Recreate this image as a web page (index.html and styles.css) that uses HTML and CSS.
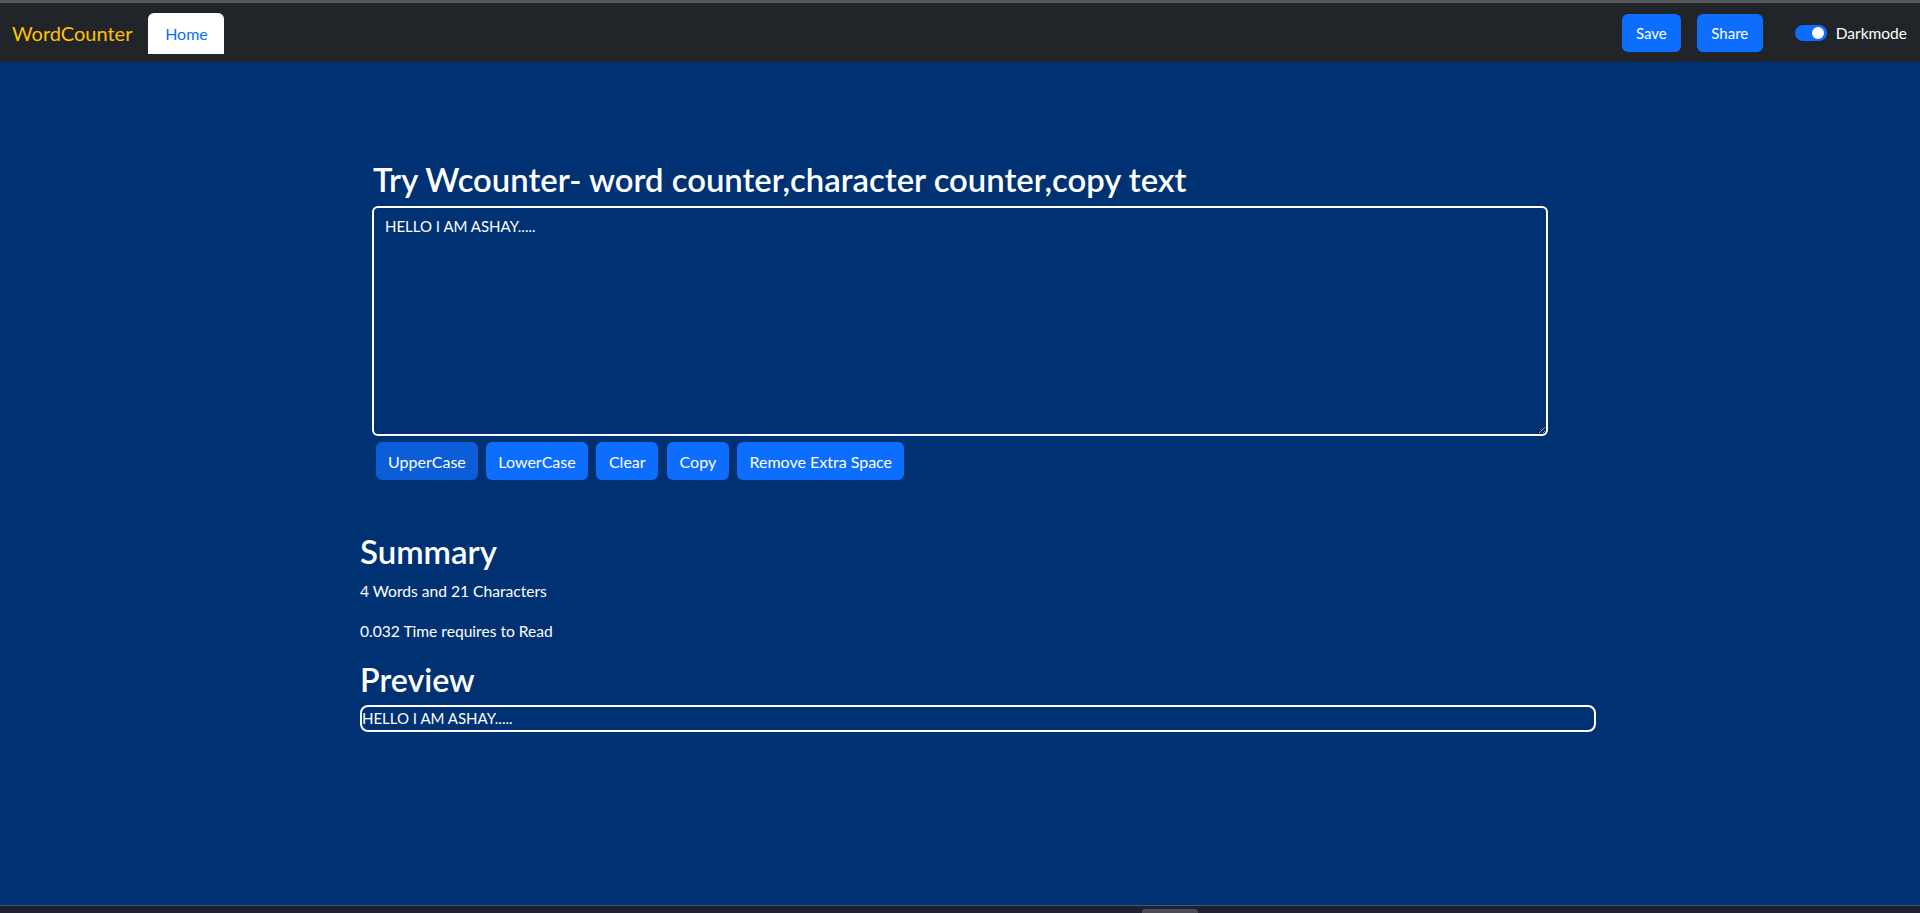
FILE: index.html
```html
<!DOCTYPE html>
<html lang="en">
<head>
<meta charset="utf-8">
<title>WordCounter</title>
<link rel="stylesheet" href="styles.css">
</head>
<body>
<div class="frame-top"></div>
<nav class="navbar">
  <div class="nav-left">
    <a class="brand" href="#">WordCounter</a>
    <a class="tab" href="#">Home</a>
  </div>
  <div class="nav-right">
    <button class="btn btn-save">Save</button>
    <button class="btn btn-share">Share</button>
    <label class="switch">
      <span class="track"><span class="knob"></span></span>
      <span class="switch-label">Darkmode</span>
    </label>
  </div>
</nav>
<main class="page">
  <section class="editor">
    <h2 class="title">Try Wcounter- word counter,character counter,copy text</h2>
    <textarea class="text-input" rows="8">HELLO I AM ASHAY.....</textarea>
    <div class="actions">
      <button class="btn btn-active">UpperCase</button>
      <button class="btn">LowerCase</button>
      <button class="btn btn-clear">Clear</button>
      <button class="btn btn-copy">Copy</button>
      <button class="btn">Remove Extra Space</button>
    </div>
  </section>
  <section class="summary">
    <h2 class="sub">Summary</h2>
    <p class="stat">4 Words and 21 Characters</p>
    <p class="stat">0.032 Time requires to Read</p>
    <h2 class="sub">Preview</h2>
    <div class="preview">HELLO I AM ASHAY.....</div>
  </section>
</main>
<div class="frame-bottom"><span class="grip"></span></div>
</body>
</html>
```

FILE: styles.css
```css
* { box-sizing: border-box; }

html, body {
  margin: 0;
  height: 100%;
}

body {
  display: flex;
  flex-direction: column;
  height: 913px;
  font-family: Lato, "Open Sans", sans-serif;
  color: #fff;
  background: #003273;
  overflow: hidden;
}

.frame-top {
  height: 3px;
  background: #555759;
  flex: none;
}

.navbar {
  flex: none;
  height: 59px;
  background: #212529;
  display: flex;
  align-items: center;
  justify-content: space-between;
  padding: 0 13px 0 12px;
}

.nav-left, .nav-right {
  display: flex;
  align-items: center;
}

.brand {
  color: #ffc107;
  font-size: 20px;
  text-decoration: none;
  line-height: 30px;
  margin-right: 16px;
}

.tab {
  display: block;
  background: #fff;
  color: #0d6efd;
  text-decoration: none;
  font-size: 16px;
  line-height: 41px;
  height: 41px;
  width: 76px;
  text-align: center;
  border-radius: 6px 6px 0 0;
  margin-top: 1px;
}

.btn {
  font-family: inherit;
  background: #0d6efd;
  color: #fff;
  border: none;
  border-radius: 6px;
  height: 38px;
  padding: 0 12px;
  font-size: 15px;
  cursor: pointer;
}

.btn-save { width: 59px; padding: 0; }
.btn-share { width: 66px; padding: 0; margin-left: 16px; }

.switch {
  display: flex;
  align-items: center;
  margin-left: 32px;
  font-size: 15.5px;
}

.track {
  display: block;
  position: relative;
  width: 32px;
  height: 16px;
  border-radius: 8px;
  background: #0d6efd;
  margin-right: 9px;
}

.knob {
  position: absolute;
  right: 3px;
  top: 2px;
  width: 12px;
  height: 12px;
  border-radius: 50%;
  background: #fff;
}

.page {
  flex: 1;
  background: #003273;
  padding-top: 99px;
}

.editor {
  width: 1176px;
  margin: 0 auto;
}

.title {
  font-size: 32.8px;
  font-weight: 600;
  line-height: 37px;
  margin: 0 0 8px 1px;
}

.text-input {
  display: block;
  width: 100%;
  height: 230px;
  border: 2px solid #fff;
  border-radius: 6px;
  background: transparent;
  color: #fff;
  font-family: inherit;
  font-size: 15px;
  line-height: 21px;
  padding: 8px 11px;
  resize: vertical;
  outline: none;
}

.actions {
  display: flex;
  gap: 8.6px;
  margin-top: 6px;
  padding-left: 4px;
}

.actions .btn { font-size: 16px; }

.actions .btn-clear { width: 62px; padding: 0; }
.actions .btn-copy { width: 62px; padding: 0; }

.btn-active { background: #0b5ed7; }

.summary {
  width: 1236px;
  margin: 53px 0 0 calc(50% - 600px);
}

.sub {
  font-size: 33px;
  font-weight: 600;
  line-height: 37px;
  margin: 0 0 9px;
}

.sub + .preview { margin-top: -2px; }

.stat {
  font-size: 15.6px;
  line-height: 24px;
  margin: 0 0 16px;
}

.stat + .sub { margin-top: 18px; font-size: 32.2px; }

.preview {
  height: 27px;
  border: 2px solid #fff;
  border-radius: 8px;
  font-size: 15px;
  line-height: 23px;
  padding-left: 0;
}

.frame-bottom {
  flex: none;
  height: 8px;
  border-top: 1px solid #4f5660;
  background: #1b2233;
  display: flex;
  justify-content: center;
}

.grip {
  display: block;
  width: 56px;
  height: 4px;
  margin-top: 3px;
  margin-left: 420px;
  border-radius: 3px 3px 0 0;
  background: #4a4d55;
}
```
